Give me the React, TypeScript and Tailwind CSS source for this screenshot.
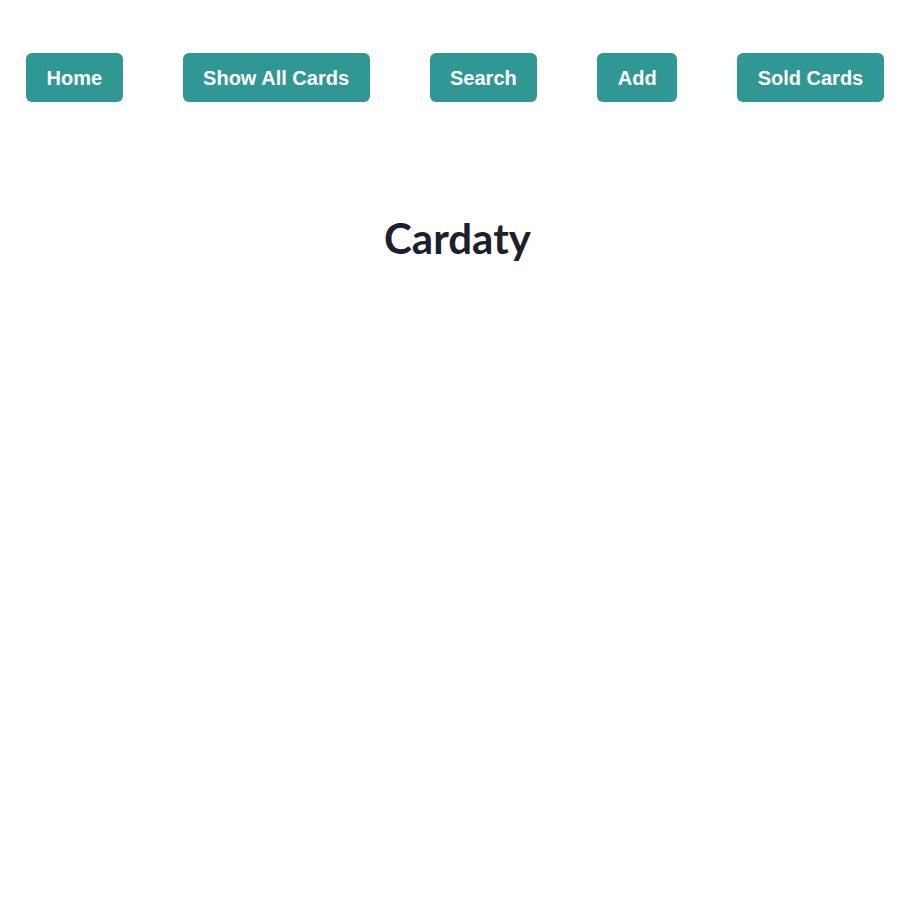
const links = ['Home', 'Show All Cards', 'Search', 'Add', 'Sold Cards'];

export default function App() {
  return (
    <div className="min-h-screen bg-white font-['Liberation_Sans',Arial,sans-serif]">
      {/* Nav */}
      <nav className="flex items-center gap-[60px] pl-[26px] pt-[53px]">
        {links.map((label) => (
          <button
            key={label}
            className="h-[49px] px-[20.5px] rounded-md bg-[#319795] text-white text-[20px] font-bold"
          >
            {label}
          </button>
        ))}
      </nav>

      {/* Title */}
      <h1 className="mt-[111px] text-center text-[42px] font-bold leading-[1.2] text-[#1a202c] font-['Lato','Noto_Sans',sans-serif]">
        Cardaty
      </h1>
    </div>
  );
}
